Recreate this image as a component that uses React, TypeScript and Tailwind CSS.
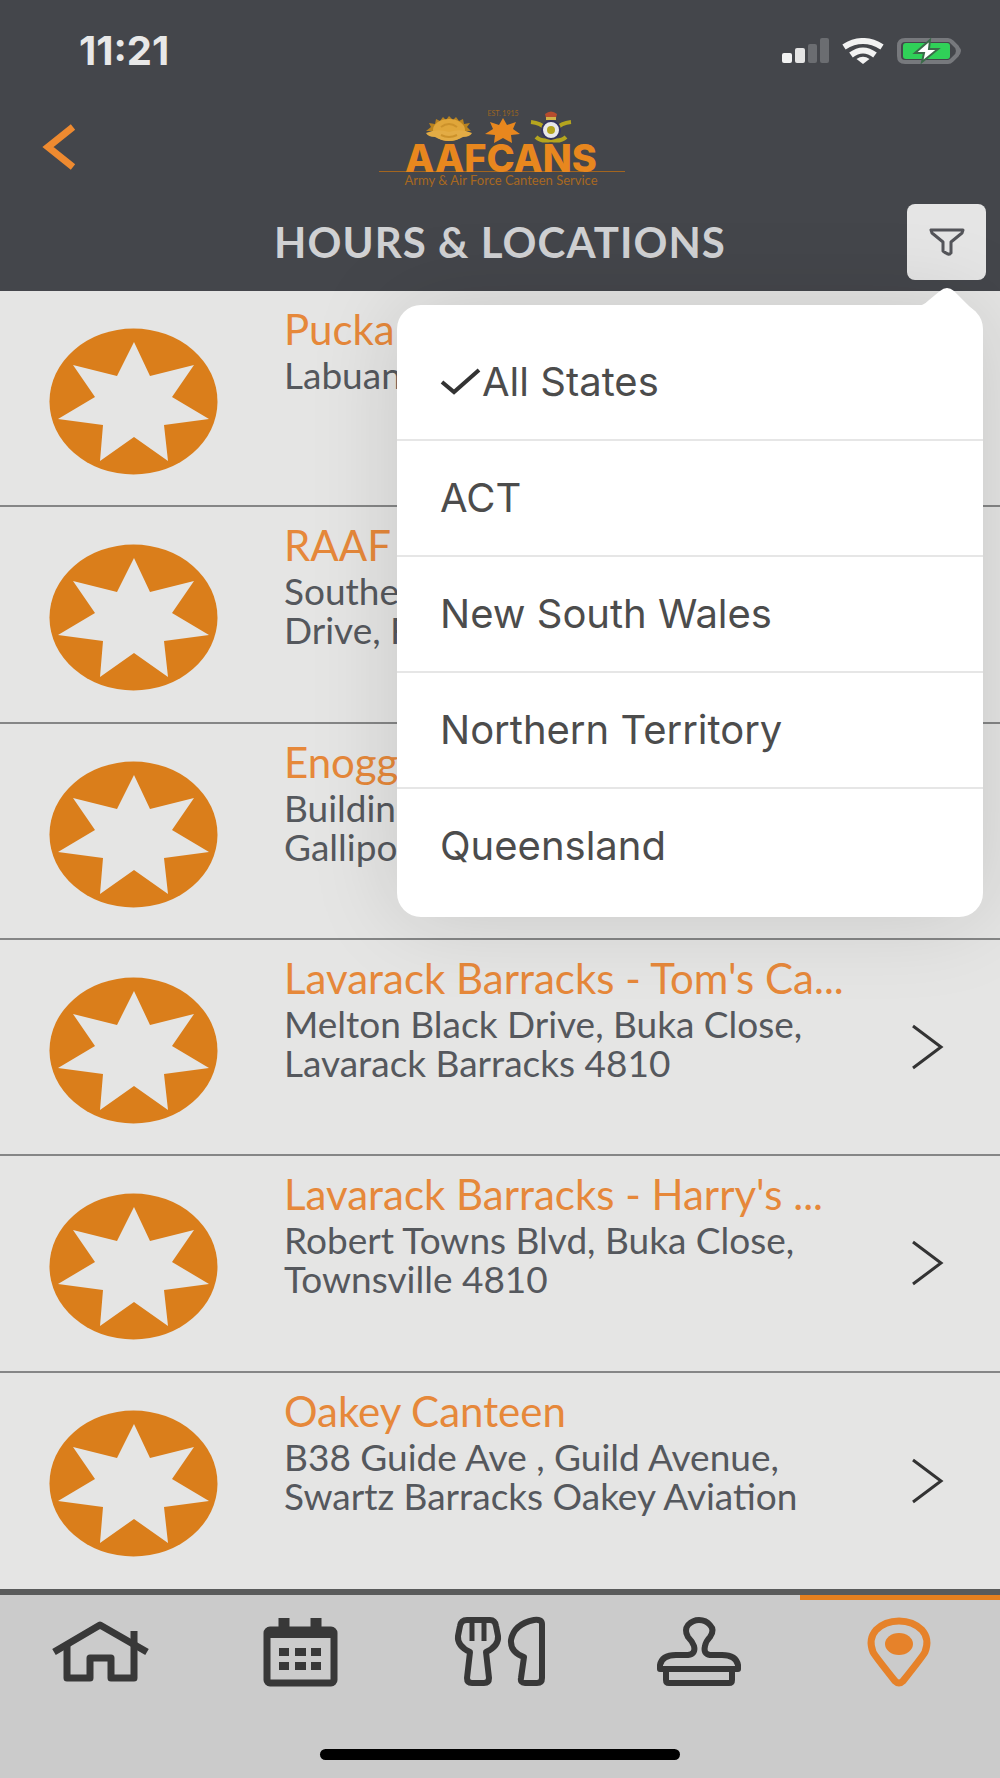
import type { ReactNode } from "react";

interface Store {
  name: string;
  address: string[];
}

const stores: Store[] = [
  { name: "Pucka", address: ["Labuan"] },
  { name: "RAAF", address: ["Southe", "Drive, F"] },
  { name: "Enogg", address: ["Buildin", "Gallipo"] },
  {
    name: "Lavarack Barracks - Tom's Ca...",
    address: ["Melton Black Drive, Buka Close,", "Lavarack Barracks 4810"],
  },
  {
    name: "Lavarack Barracks - Harry's ...",
    address: ["Robert Towns Blvd, Buka Close,", "Townsville 4810"],
  },
  {
    name: "Oakey Canteen",
    address: ["B38 Guide Ave , Guild Avenue,", "Swartz Barracks Oakey Aviation"],
  },
];

const states = ["All States", "ACT", "New South Wales", "Northern Territory", "Queensland"];

function StatusBar() {
  return (
    <div className="flex h-[102px] items-center justify-between pl-[79px] pr-9">
      <span className="font-['Inter',sans-serif] text-[40px] font-bold text-[#e8e8e8]">11:21</span>
      <div className="flex items-center gap-3">
        <svg width="48" height="26" viewBox="0 0 48 26">
          <rect x="0" y="15" width="10" height="10" rx="2" fill="#f2f2f2" />
          <rect x="13" y="10" width="10" height="15" rx="2" fill="#e4e4e4" />
          <rect x="26" y="6" width="9" height="19" rx="2" fill="#6b6d71" />
          <rect x="38" y="0" width="9" height="25" rx="2" fill="#6b6d71" />
        </svg>
        <svg width="42" height="26" viewBox="0 0 42 26" fill="none" stroke="#f2f2f2" strokeWidth="6">
          <path d="M2 9 Q21 -3 40 9" />
          <path d="M9 17 Q21 8 33 17" />
          <path d="M21 26 L14.500 21 Q21 16.500 27.500 21 Z" fill="#f2f2f2" stroke="none" />
        </svg>
        <svg width="68" height="28" viewBox="0 0 68 28">
          <path d="M9 3 H52 Q54 3 56 5 L61 10 Q63 14 61 18 L56 23 Q54 25 52 25 H9 Q3 25 3 19 V9 Q3 3 9 3 Z" fill="none" stroke="#77797d" strokeWidth="4" />
          <path d="M62 9 Q68 14 62 19 Z" fill="#77797d" />
          <rect x="7" y="6" width="47" height="16" rx="3" fill="#30d158" />
          <path d="M34 3 L19 16 H28 L26 25 L42 12 H33 Z" fill="#fff" stroke="#3c6b4a" strokeWidth="2" />
        </svg>
      </div>
    </div>
  );
}

function Logo() {
  return (
    <svg width="250" height="82" viewBox="0 0 250 82" role="img" aria-label="AAFCANS">
      {/* rising sun */}
      <path
        d="M51 25 L56 21 L54 17 L60 18 L61 13 L65 15 L68 11 L71 14 L74 10 L78 14 L81 11 L84 15 L88 13 L89 18 L95 17 L92 21 L96 25 Z"
        fill="#b9831f"
      />
      <ellipse cx="74" cy="24" rx="16" ry="11" fill="#e0a63a" />
      <path d="M51 27 Q62 22 74 26 Q86 22 97 27 Q95 31 88 31 Q74 39 60 31 Q53 31 51 27 Z" fill="#e3ac45" />
      <path d="M66 21 Q74 15 82 21 M66 29 Q74 33 82 29" stroke="#cc922b" strokeWidth="2" fill="none" />
      <text x="128" y="10" textAnchor="middle" fontSize="7" fill="#9b651f" fontFamily="Lato, sans-serif">
        EST. 1915
      </text>
      {/* star */}
      <path
        d="M128 12 L132 19 L141 16 L138 23 L145 28 L136 29 L137 37 L128 32 L119 37 L120 29 L110 28 L118 23 L115 16 L124 19 Z"
        fill="#e8871e"
      />
      {/* air force badge */}
      <path d="M156 16 Q166 17 171 23 M196 16 Q186 17 181 23 M161 31 Q166 36 176 34 Q186 36 191 31" stroke="#b5a51e" strokeWidth="4" fill="none" />
      <circle cx="176" cy="24" r="9" fill="#e8e8ea" stroke="#34345f" strokeWidth="2" />
      <circle cx="176" cy="24" r="4" fill="#b5a51e" />
      <path d="M171 12 L170 8 Q176 3 182 8 L181 12 Z" fill="#b64c2e" />
      <rect x="171" y="11" width="10" height="3" fill="#d0b34a" />
      <rect x="4" y="65" width="246" height="1" fill="#a3651f" />
      <text x="126" y="66" textAnchor="middle" fontSize="38" fontWeight="800" fill="#e8871e" fontFamily="Inter, sans-serif">
        AAFCANS
      </text>
      <text x="126" y="79" textAnchor="middle" fontSize="13" fill="#a8681f" fontFamily="Lato, sans-serif">
        Army &amp; Air Force Canteen Service
      </text>
    </svg>
  );
}

function StateMenu() {
  return (
    <div className="absolute right-[17px] top-[305px] z-10 w-[586px] rounded-[24px] bg-white pb-[14px] pt-5 shadow-[0_0_90px_rgba(0,0,0,0.13)]">
      <svg className="absolute -top-[17px] right-[6px]" width="60" height="24" viewBox="0 0 60 24">
        <path d="M0 18 Q6 18 12 12 L23 3 Q30 -3 37 3 L52 18 L59 24 H0 Z" fill="#fff" />
      </svg>
      <ul>
        {states.map((state, i) => (
          <li key={state} className="border-b-2 border-[#e6e6e6] last:border-b-0">
            <button
              type="button"
              className="flex h-[114px] w-full items-center pl-[43px] font-['Inter',sans-serif] text-[40px] text-[#4c4c4c]"
            >
              {i === 0 && (
                <svg width="42" height="28" viewBox="0 0 42 28" fill="none" stroke="#333" strokeWidth="4">
                  <path d="M2 14 L14 24 L39 2" />
                </svg>
              )}
              {state}
            </button>
          </li>
        ))}
      </ul>
    </div>
  );
}

function StoreRow({ store }: { store: Store }) {
  return (
    <li className="border-b-2 border-[#858686] last:border-b-0">
      <a href="#store" className="flex h-full items-start pl-[49px] pr-[56px]">
        <svg className="mt-[37px] shrink-0" width="169" height="147" viewBox="0 0 169 147">
          <ellipse cx="84.500" cy="73.500" rx="84" ry="73" fill="#da7e1b" />
          <path
            d="M85 14 L101 48 L145 37 L123 69 L160 91 L115 97 L119 133 L85 109 L51 133 L54 97 L9 91 L46 69 L24 37 L68 48 Z"
            fill="#e5e5e4"
          />
        </svg>
        <div className="ml-[66px] mt-3 min-w-0 flex-1 whitespace-nowrap">
          <h2 className="text-[42px] leading-[52px] text-[#e6883a]">{store.name}</h2>
          {store.address.map((line) => (
            <p key={line} className="text-[37px] leading-[39px] text-[#55585d]">
              {line}
            </p>
          ))}
        </div>
        <svg className="shrink-0 self-center" width="32" height="46" viewBox="0 0 32 46" fill="none" stroke="#333" strokeWidth="3">
          <path d="M1 2 L29 23 L1 44" />
        </svg>
      </a>
    </li>
  );
}

function NavItem({ label, active, children }: { label: string; active?: boolean; children: ReactNode }) {
  return (
    <a
      href="#nav"
      aria-label={label}
      className={
        active
          ? "flex h-[118px] justify-center border-t-[5px] border-[#e6801f] pt-3 text-[#e6822a]"
          : "flex h-[118px] justify-center border-t-[5px] border-transparent pt-3 text-[#383838]"
      }
    >
      <svg width="100" height="80" viewBox="0 0 100 80" fill="none" stroke="currentColor" strokeWidth="7" strokeLinejoin="round">
        {children}
      </svg>
    </a>
  );
}

function BottomNav() {
  return (
    <nav className="border-t-[6px] border-[#5a5b5b] bg-[#cbcbcb] pb-[18px]">
      <div className="grid grid-cols-5">
        <NavItem label="Home">
          <path d="M4 40 L50 13 L97 40" />
          <path d="M17 34 V66 H40 V46 H61 V66 H84 V19" />
        </NavItem>
        <NavItem label="Calendar">
          <rect x="17" y="18" width="67" height="53" rx="3" />
          <path d="M16 21 H85" strokeWidth="10" />
          <path d="M34 6 V18 M66 6 V18" strokeWidth="11" />
          <path d="M29 40 H39 M45 40 H56 M61 40 H71 M29 54 H39 M45 54 H56 M61 54 H71" strokeWidth="8" />
        </NavItem>
        <NavItem label="Menu">
          <path d="M17 8 H40 Q45 8 46 14 L48 24 Q49 34 36 40 L39 66 Q39 71 34 71 H22 Q17 71 17 66 L20 40 Q7 34 8 24 L10 14 Q11 8 17 8 Z" strokeWidth="6" />
          <path d="M22 9 V29 M34 9 V29" strokeWidth="5" />
          <path d="M92 12 V66 Q92 71 87 71 H75 Q70 71 71 66 L74 45 Q60 40 61 28 Q64 12 84 8 Q92 7 92 12 Z" strokeWidth="6" />
        </NavItem>
        <NavItem label="Rewards">
          <path d="M10 57 V53 Q12 43 26 43 H38 Q46 42 44 34 Q42 29 38 25 Q34 18 38 13 Q43 8 49 8 Q56 8 60 13 Q65 18 60 25 Q56 29 55 34 Q53 42 60 43 H72 Q86 43 88 53 V57 Z" strokeWidth="6" />
          <path d="M16 58 V68 Q16 71 19 71 H79 Q82 71 82 68 V58" strokeWidth="6" />
        </NavItem>
        <NavItem label="Locations" active>
          <path d="M49 9 Q63 9 72 18 Q80 27 75 40 Q73 44 53 69 Q49 73 45 69 Q25 44 23 40 Q18 27 26 18 Q35 9 49 9 Z" />
          <ellipse cx="49" cy="32" rx="14" ry="11" fill="currentColor" stroke="none" />
        </NavItem>
      </div>
      <div className="mx-auto mt-9 h-[11px] w-[36%] rounded-full bg-black" />
    </nav>
  );
}

export default function App() {
  return (
    <div className="relative flex min-h-screen flex-col bg-[#e5e5e4] font-['Lato',sans-serif]">
      <header className="h-[291px] bg-[#44464b]">
        <StatusBar />
        <div className="grid h-[90px] grid-cols-[1fr_auto_1fr] items-center">
          <button type="button" aria-label="Back" className="ml-[42px] w-[36px]">
            <svg width="36" height="46" viewBox="0 0 36 46" fill="none" stroke="#ee8a30" strokeWidth="7">
              <path d="M31 3 L6 23 L31 43" />
            </svg>
          </button>
          <Logo />
        </div>
        <div className="grid grid-cols-[1fr_auto_1fr] items-center px-[14px] pt-[12px]">
          <h1 className="col-start-2 text-[42px] font-bold leading-[76px] tracking-wide text-[#d0d1d3]">
            HOURS &amp; LOCATIONS
          </h1>
          <button
            type="button"
            aria-label="Filter by state"
            className="flex h-[76px] w-[79px] items-center justify-center justify-self-end rounded-[8px] bg-[#e5e5e5]"
          >
            <svg width="36" height="29" viewBox="0 0 36 29" fill="none" stroke="#54555a" strokeWidth="3" strokeLinejoin="round">
              <path d="M2 2 H34 L33 5 L22 14 V25 Q20 28 14 23 V14 L3 5 Z" />
            </svg>
          </button>
        </div>
      </header>

      <ul className="grid flex-1 auto-rows-fr">
        {stores.map((store) => (
          <StoreRow key={store.name} store={store} />
        ))}
      </ul>

      <BottomNav />
      <StateMenu />
    </div>
  );
}
